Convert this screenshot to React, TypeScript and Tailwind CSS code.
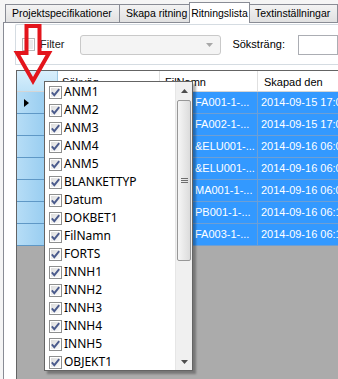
import React from 'react';

const columns = ['ANM1', 'ANM2', 'ANM3', 'ANM4', 'ANM5', 'BLANKETTYP', 'Datum', 'DOKBET1', 'FilNamn', 'FORTS', 'INNH1', 'INNH2', 'INNH3', 'INNH4', 'INNH5', 'OBJEKT1'];

const rows = [
  { name: 'FA001-1-...', date: '2014-09-15 17:05:33' },
  { name: 'FA002-1-...', date: '2014-09-15 17:05:41' },
  { name: '&ELU001-...', date: '2014-09-16 06:02:10' },
  { name: '&ELU001-...', date: '2014-09-16 06:02:18' },
  { name: 'MA001-1-...', date: '2014-09-16 06:08:47' },
  { name: 'PB001-1-...', date: '2014-09-16 06:12:03' },
  { name: 'FA003-1-...', date: '2014-09-16 06:14:29' },
];

const tabs = [
  { label: 'Projektspecifikationer', w: 'w-[114px]' },
  { label: 'Skapa ritning', w: 'w-[72px]' },
  { label: 'Ritningslista', w: 'w-[71px]', active: true },
  { label: 'Textinställningar', w: 'w-[90px]' },
];

function Check({ checked }: { checked: boolean }) {
  return (
    <svg width="13" height="13" viewBox="0 0 13 13" className="shrink-0">
      <defs>
        <linearGradient id="cbg" x1="0" y1="0" x2="1" y2="1">
          <stop offset="0" stopColor="#dcdcdc" />
          <stop offset="1" stopColor="#fbfbfb" />
        </linearGradient>
      </defs>
      <rect x="0.5" y="0.5" width="12" height="12" fill="#fff" stroke={checked ? '#8e8f8f' : '#b8b8b8'} />
      <rect x="2" y="2" width="9" height="9" fill={checked ? 'url(#cbg)' : '#ececec'} />
      {checked && <path d="M2.8 6.4 L5.3 9.2 L10.2 3.2" fill="none" stroke="#4a5a8c" strokeWidth="1.9" />}
    </svg>
  );
}

function Tri({ up }: { up?: boolean }) {
  return (
    <svg width="7" height="4" viewBox="0 0 7 4">
      <path d={up ? 'M0 4 L3.5 0 L7 4 Z' : 'M0 0 L7 0 L3.5 4 Z'} fill="#4d4d4d" />
    </svg>
  );
}

export default function App() {
  return (
    <div
      className="relative w-[338px] h-[379px] overflow-hidden bg-[#f5f5f5] flex flex-col text-[11px] text-black"
      style={{ fontFamily: '"Liberation Sans", Arial, sans-serif' }}
    >
      {/* tab strip */}
      <div className="h-[22px] shrink-0 flex items-end pl-[5px] text-[10.5px]">
        {tabs.map((t) =>
          t.active ? (
            <div
              key={t.label}
              className={`${t.w} relative z-10 h-[21px] -mb-px -mx-[2px] bg-white border border-b-0 border-[#898c95] flex items-start justify-center pt-[3px]`}
            >
              {t.label}
            </div>
          ) : (
            <div
              key={t.label}
              className={`${t.w} shrink-0 h-[18px] bg-gradient-to-b from-[#f3f3f3] to-[#e1e1e1] border border-b-0 border-r-0 last:border-r border-[#898c95] flex items-center pl-[6px] whitespace-nowrap overflow-hidden`}
            >
              {t.label}
            </div>
          )
        )}
      </div>

      {/* tab page */}
      <div className="flex-1 ml-[3px] bg-white border-l border-t border-[#898c95] pl-[11px] pt-px flex flex-col">
        <div className="h-[41px] shrink-0 border border-r-0 border-[#d5dce2] rounded-tl-[2px] flex items-center pl-[6px]">
          <Check checked={false} />
          <span className="ml-[5px] text-[#222]">Filter</span>
          <div className="ml-[16px] w-[181px] h-[20px] rounded-[3px] border border-[#c9c9c9] bg-[#f4f4f4] flex items-center justify-end pr-[7px]">
            <svg width="7" height="4" viewBox="0 0 7 4">
              <path d="M0 0 L7 0 L3.5 4 Z" fill="#a8a8a8" />
            </svg>
          </div>
          <span className="ml-[11px]">Söksträng:</span>
          <div className="ml-[13px] w-[40px] h-[20px] shrink-0 border border-[#abadb3] bg-white" />
        </div>

        {/* grid */}
        <div className="mt-[5px] ml-px flex-1 border-l border-t border-[#646464] bg-[#ababab] flex flex-col">
          <div className="h-[21px] shrink-0 flex bg-white border-b border-[#d5d5d5]">
            <div className="w-[41px] shrink-0 bg-gradient-to-b from-[#d9effc] to-[#bfe3f8] border-r border-[#9ec9e4]" />
            <div className="w-[102px] shrink-0 border-r border-[#e0e0e0] pl-[4px] pt-[3px]">Sökväg</div>
            <div className="w-[98px] shrink-0 border-r border-[#e0e0e0] pl-[5px] pt-[3px]">FilNamn</div>
            <div className="flex-1 pl-[6px] pt-[3px] whitespace-nowrap">Skapad den</div>
          </div>
          {rows.map((r, i) => (
            <div key={i} className="h-[22px] shrink-0 flex">
              <div className="w-[41px] shrink-0 flex border-b border-[#5f98c6] bg-gradient-to-r from-[#b6ddf6] to-[#8bc6ee] items-center pl-[7px]">
                {i === 0 && (
                  <svg width="5" height="8" viewBox="0 0 5 8">
                    <path d="M0 0 L5 4 L0 8 Z" fill="#000" />
                  </svg>
                )}
              </div>
              <div className="w-[102px] shrink-0 bg-[#3399ff] border-b border-r border-[#6e9fd4]" />
              <div className="w-[98px] shrink-0 bg-[#3399ff] border-b border-r border-[#6e9fd4] text-white pl-[35px] flex items-center whitespace-nowrap overflow-hidden">
                {r.name}
              </div>
              <div className="flex-1 bg-[#3399ff] border-b border-[#6e9fd4] text-white pl-[3px] flex items-center whitespace-nowrap overflow-hidden">
                {r.date}
              </div>
            </div>
          ))}
        </div>
      </div>

      {/* red arrow annotation */}
      <svg className="absolute left-0 top-0 pointer-events-none" width="60" height="90" viewBox="0 0 60 90">
        <path d="M26.5 26 L39.5 26 L39.5 53 L49 53 L33 81 L17 53 L26.5 53 Z" fill="none" stroke="#e3151c" strokeWidth="4" strokeLinejoin="miter" />
      </svg>

      {/* column chooser popup */}
      <div
        className="absolute left-[44px] top-[81px] w-[149px] h-[290px] bg-white border border-[#646464] shadow-[3px_3px_2px_rgba(0,0,0,0.3)] flex text-[12px]"
        style={{ fontFamily: '"Noto Sans", "Open Sans", sans-serif' }}
      >
        <div className="flex-1 pt-px pl-[4px] flex flex-col">
          {columns.map((c) => (
            <div key={c} className="h-[18px] shrink-0 flex items-center gap-[2px]">
              <Check checked />
              <span className="leading-none">{c}</span>
            </div>
          ))}
        </div>
        <div className="w-[17px] shrink-0 bg-[#f0f0f0] border-l border-[#e6e6e6] flex flex-col">
          <div className="h-[17px] shrink-0 flex items-center justify-center">
            <Tri up />
          </div>
          <div className="mt-px mx-px h-[161px] shrink-0 rounded-[2px] border border-[#979797] bg-gradient-to-r from-[#f6f6f6] to-[#dcdcdc] flex flex-col items-center justify-center gap-[1px]">
            <div className="w-[7px] h-px bg-[#6e6e6e]" />
            <div className="w-[7px] h-px bg-[#6e6e6e]" />
            <div className="w-[7px] h-px bg-[#6e6e6e]" />
          </div>
          <div className="flex-1" />
          <div className="h-[17px] shrink-0 flex items-center justify-center">
            <Tri />
          </div>
        </div>
      </div>
    </div>
  );
}
